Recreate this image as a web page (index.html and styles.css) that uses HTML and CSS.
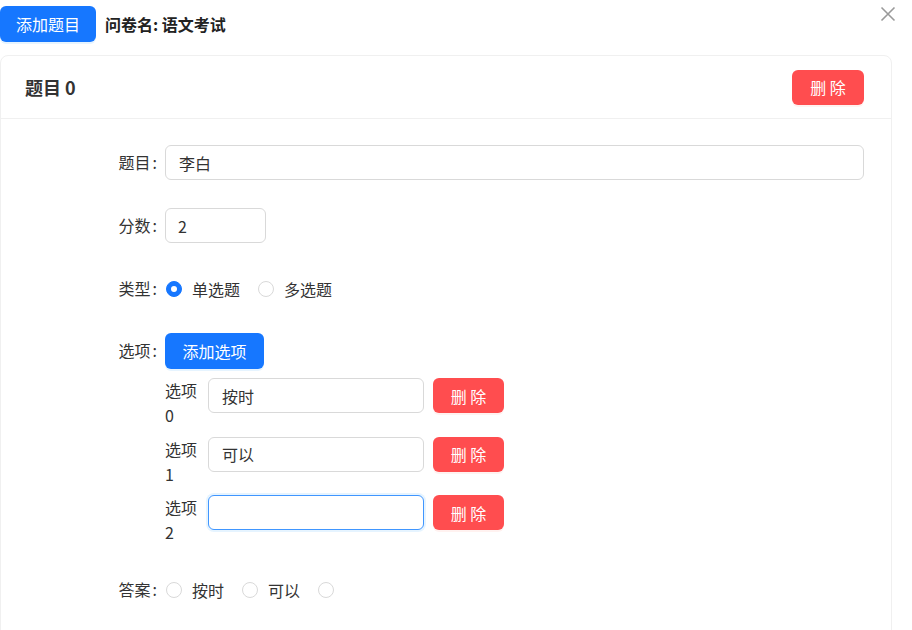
FILE: index.html
```html
<!DOCTYPE html>
<html lang="zh-CN">
<head>
<meta charset="utf-8">
<title>问卷编辑</title>
<link rel="stylesheet" href="styles.css">
</head>
<body>
<div class="page">
  <div class="topbar">
    <button class="btn btn-primary btn-add-q">添加题目</button>
    <div class="survey-name">问卷名: 语文考试</div>
  </div>
  <button class="close" aria-label="关闭">
    <svg width="16" height="16" viewBox="0 0 16 16"><path d="M1.5 1.5L14.5 14.5M14.5 1.5L1.5 14.5" stroke="#9a9a9a" stroke-width="1.6" fill="none"/></svg>
  </button>

  <div class="card">
    <div class="card-head">
      <div class="card-title">题目 0</div>
      <button class="btn btn-danger">删 除</button>
    </div>
    <div class="card-body">
      <div class="form-item">
        <label class="form-label">题目<span class="colon">:</span></label>
        <div class="form-control"><input class="input input-wide" value="李白"></div>
      </div>
      <div class="form-item">
        <label class="form-label">分数<span class="colon">:</span></label>
        <div class="form-control"><input class="input input-score" value="2"></div>
      </div>
      <div class="form-item form-item-type">
        <label class="form-label">类型<span class="colon">:</span></label>
        <div class="form-control radios">
          <span class="radio"><span class="radio-dot checked"></span><span class="radio-text">单选题</span></span>
          <span class="radio"><span class="radio-dot"></span><span class="radio-text">多选题</span></span>
        </div>
      </div>
      <div class="form-item form-item-options">
        <label class="form-label">选项<span class="colon">:</span></label>
        <div class="form-control options">
          <button class="btn btn-primary btn-add-opt">添加选项</button>
          <div class="opt-list">
            <div class="opt-row">
              <div class="opt-label">选项 0</div>
              <input class="input input-opt" value="按时">
              <button class="btn btn-danger btn-opt-del">删 除</button>
            </div>
            <div class="opt-row">
              <div class="opt-label">选项 1</div>
              <input class="input input-opt" value="可以">
              <button class="btn btn-danger btn-opt-del">删 除</button>
            </div>
            <div class="opt-row">
              <div class="opt-label">选项 2</div>
              <input class="input input-opt focused" value="">
              <button class="btn btn-danger btn-opt-del">删 除</button>
            </div>
          </div>
        </div>
      </div>
      <div class="form-item">
        <label class="form-label">答案<span class="colon">:</span></label>
        <div class="form-control radios">
          <span class="radio"><span class="radio-dot"></span><span class="radio-text">按时</span></span>
          <span class="radio"><span class="radio-dot"></span><span class="radio-text">可以</span></span>
          <span class="radio"><span class="radio-dot"></span><span class="radio-text"></span></span>
        </div>
      </div>
    </div>
  </div>
</div>
</body>
</html>
```

FILE: styles.css
```css
* { box-sizing: border-box; }
html, body {
  margin: 0;
  padding: 0;
  background: #fff;
  overflow: hidden;
}
body {
  font-family: "Noto Sans CJK SC", "Microsoft YaHei", "Noto Sans", sans-serif;
  font-size: 16px;
  color: #333;
}
.page {
  position: relative;
  width: 912px;
  height: 630px;
}
.topbar {
  display: flex;
  align-items: center;
  gap: 9px;
  padding-top: 6px;
  height: 42px;
}
.btn {
  font-family: inherit;
  font-size: 16px;
  border: none;
  border-radius: 6px;
  color: #fff;
  cursor: pointer;
  padding: 0;
  line-height: 1;
}
.btn-primary {
  background: #1677ff;
  box-shadow: 0 2px 0 rgba(5, 145, 255, 0.1);
}
.btn-danger {
  background: #ff4d4f;
  box-shadow: 0 2px 0 rgba(255, 38, 5, 0.06);
  width: 72px;
  height: 35px;
}
.btn-add-q {
  width: 96px;
  height: 36px;
}
.survey-name {
  font-weight: 700;
  font-size: 16px;
  color: #222;
  line-height: 36px;
}
.close {
  position: absolute;
  top: 6px;
  right: 16px;
  width: 16px;
  height: 16px;
  padding: 0;
  border: none;
  background: none;
}
.close svg { display: block; }

.card {
  margin-top: 13px;
  width: 892px;
  height: 600px;
  border: 1px solid #f0f0f0;
  border-radius: 8px;
}
.card-head {
  height: 63px;
  display: flex;
  align-items: center;
  justify-content: space-between;
  padding: 0 27px 0 24px;
  border-bottom: 1px solid #f0f0f0;
}
.card-title {
  font-weight: 700;
  font-size: 18px;
  color: #333;
}
.card-body {
  padding-top: 26px;
}
.form-item {
  display: flex;
  align-items: flex-start;
  margin-bottom: 28px;
}
.form-item-type {
  margin-bottom: 27px;
}
.form-label {
  width: 164px;
  flex: none;
  text-align: right;
  line-height: 35px;
  height: 35px;
  color: #333;
}
.colon {
  margin: 0 8px 0 2px;
}
.form-control {
  flex: 1;
  min-height: 35px;
}
.input {
  font-family: inherit;
  font-size: 16px;
  color: #333;
  height: 35px;
  border: 1px solid #d9d9d9;
  border-radius: 6px;
  padding: 0 13px;
  outline: none;
  background: #fff;
}
.input-wide { width: 699px; }
.input-score { width: 101px; padding-left: 12px; }
.input.focused {
  border-color: #4096ff;
  box-shadow: 0 0 0 2px rgba(5, 145, 255, 0.1);
}
.radios {
  display: flex;
  align-items: center;
  height: 35px;
}
.radio {
  display: inline-flex;
  align-items: center;
  margin-right: 17px;
}
.radio-dot {
  width: 16px;
  height: 16px;
  border-radius: 50%;
  border: 1px solid #d9d9d9;
  background: #fff;
  margin-left: 1px;
  margin-right: 10px;
  position: relative;
}
.radio-dot.checked {
  border-color: #1677ff;
  background: #1677ff;
}
.radio-dot.checked::after {
  content: "";
  position: absolute;
  left: 4px;
  top: 4px;
  width: 6px;
  height: 6px;
  border-radius: 50%;
  background: #fff;
}
.radio-text { line-height: 22px; }

.form-item-options {
  margin-bottom: 27px;
}
.btn-add-opt {
  width: 99px;
  height: 36px;
}
.opt-list {
  margin-top: 9px;
  display: flex;
  flex-direction: column;
  gap: 8.5px;
}
.opt-row {
  display: flex;
  align-items: flex-start;
  height: 50px;
}
.opt-label {
  width: 35px;
  margin-right: 8px;
  line-height: 25px;
  font-size: 16px;
  word-break: break-all;
}
.input-opt { width: 216px; }
.btn-opt-del {
  margin-left: 9px;
  width: 71px;
}
```
